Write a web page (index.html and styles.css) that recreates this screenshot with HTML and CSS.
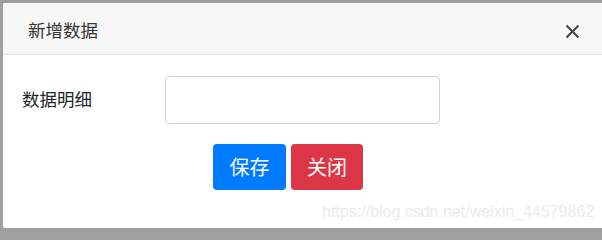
FILE: index.html
```html
<!DOCTYPE html>
<html lang="zh-CN">
<head>
<meta charset="utf-8">
<title>新增数据</title>
<link rel="stylesheet" href="styles.css">
</head>
<body>
<div class="backdrop">
  <div class="modal">
    <div class="modal-header">
      <h5 class="modal-title">新增数据</h5>
      <button class="close" type="button" aria-label="Close">
        <svg width="15" height="15" viewBox="0 0 15 15"><path d="M1.5 1.5 L13.5 13.5 M13.5 1.5 L1.5 13.5" stroke="#444" stroke-width="2" stroke-linecap="butt" fill="none"/></svg>
      </button>
    </div>
    <div class="modal-body">
      <div class="form-row">
        <label class="form-label">数据明细</label>
        <input class="form-input" type="text">
      </div>
      <div class="actions">
        <button class="btn btn-primary" type="button">保存</button>
        <button class="btn btn-danger" type="button">关闭</button>
      </div>
    </div>
    <div class="watermark">https://blog.csdn.net/weixin_44579862</div>
  </div>
</div>
</body>
</html>
```

FILE: styles.css
```css
html, body {
  margin: 0;
  padding: 0;
  height: 100%;
  overflow: hidden;
}
body {
  background: #9f9f9f;
  font-family: "Noto Sans CJK SC", "Liberation Sans", sans-serif;
  color: #212529;
}
.backdrop {
  padding: 3px 0 0 3px;
}
.modal {
  position: relative;
  width: 620px;
  height: 225px;
  background: #fff;
  border-radius: 2px 0 0 2px;
  overflow: hidden;
}
.modal-header {
  height: 51px;
  background: #f7f7f7;
  border-bottom: 1px solid #e5e5e5;
  display: flex;
  align-items: center;
  padding: 0 0 0 25px;
  box-sizing: content-box;
}
.modal-title {
  margin: 0;
  font-size: 17.5px;
  font-weight: normal;
  line-height: 1;
  color: #333;
  flex: 0 0 auto;
  padding-top: 3px;
}
.close {
  margin-left: 467px;
  padding: 0;
  border: 0;
  background: transparent;
  width: 15px;
  height: 15px;
  display: flex;
  margin-top: 6px;
}
.modal-body {
  padding: 21px 0 0 19px;
}
.form-row {
  display: flex;
  align-items: center;
}
.form-label {
  width: 143px;
  font-size: 17.5px;
  line-height: 1;
  color: #212529;
  margin-top: -3px;
}
.form-input {
  width: 275px;
  height: 48px;
  box-sizing: border-box;
  border: 1px solid #ced4da;
  border-radius: 4px;
  margin: 0;
  padding: 0 12px;
  background: #fff;
}
.actions {
  display: flex;
  gap: 5px;
  margin: 20px 0 0 191px;
}
.btn {
  width: 73px;
  height: 46px;
  border: 0;
  border-radius: 4px;
  color: #fff;
  font-family: "Noto Sans CJK SC", sans-serif;
  font-size: 20px;
  line-height: 1;
  padding: 0;
}
.btn-primary {
  background: #007bff;
}
.btn-danger {
  width: 72px;
  background: #dc3545;
}
.watermark {
  position: absolute;
  left: 319px;
  top: 200px;
  font-family: "Liberation Sans", Arial, sans-serif;
  font-size: 16px;
  line-height: 18px;
  color: #ebebeb;
  white-space: nowrap;
}
```
